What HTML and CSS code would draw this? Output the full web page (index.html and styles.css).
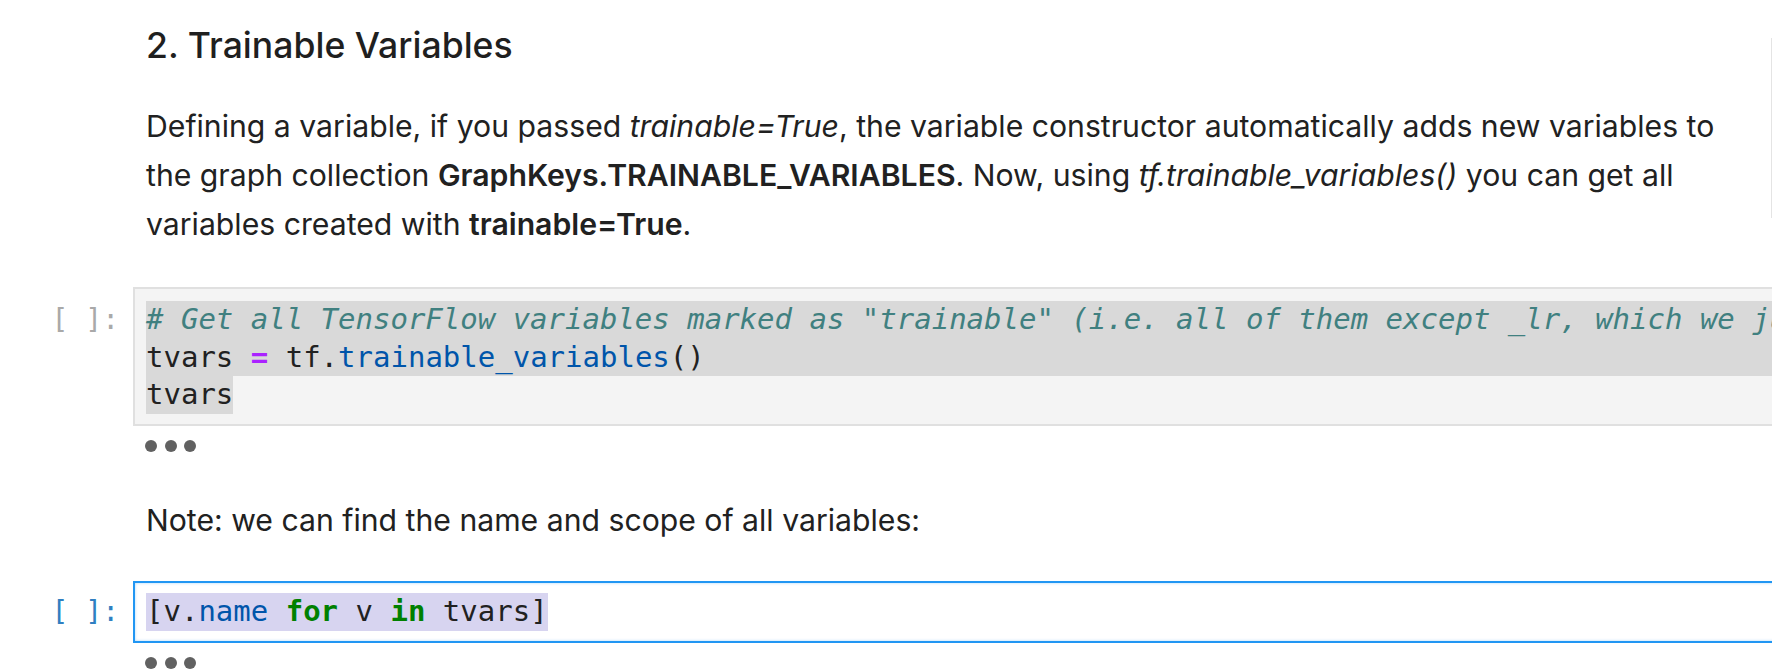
FILE: index.html
```html
<!DOCTYPE html>
<html lang="en">
<head>
<meta charset="utf-8">
<title>Trainable Variables</title>
<link rel="stylesheet" href="styles.css">
</head>
<body>
<div class="edge-line"></div>
<main class="notebook">
  <section class="cell md-cell">
    <div class="prompt"></div>
    <div class="md">
      <h4 class="md-h">2. Trainable Variables</h4>
      <p class="md-p">Defining a variable, if you passed <em>trainable=True</em>, the variable constructor automatically adds new variables to the graph collection <strong>GraphKeys.TRAINABLE_VARIABLES</strong>. Now, using <em>tf.trainable_variables()</em> you can get all variables created with <strong>trainable=True</strong>.</p>
    </div>
  </section>

  <section class="cell code-cell">
    <div class="prompt">[ ]:</div>
    <div class="code-wrap">
      <div class="editor">
        <div class="line sel"><span class="c"># Get all TensorFlow variables marked as "trainable" (i.e. all of them except _lr, which we just created)</span></div>
        <div class="line sel">tvars <span class="o">=</span> tf.<span class="f">trainable_variables</span>()</div>
        <div class="line"><span class="sel-inline">tvars</span></div>
      </div>
      <div class="collapsed"><i></i><i></i><i></i></div>
    </div>
  </section>

  <section class="cell md-cell note-cell">
    <div class="prompt"></div>
    <div class="md">
      <p class="md-p">Note: we can find the name and scope of all variables:</p>
    </div>
  </section>

  <section class="cell code-cell active">
    <div class="prompt">[ ]:</div>
    <div class="code-wrap">
      <div class="editor">
        <div class="line"><span class="sel-focus">[v.<span class="f">name</span> <span class="k">for</span> v <span class="k">in</span> tvars]</span></div>
      </div>
      <div class="collapsed"><i></i><i></i><i></i></div>
    </div>
  </section>
</main>
</body>
</html>
```

FILE: styles.css
```css
html, body {
  margin: 0;
  padding: 0;
  background: #ffffff;
  overflow: hidden;
}

body {
  width: 1772px;
  height: 670px;
  position: relative;
  font-family: "Inter", "Liberation Sans", sans-serif;
  color: #212121;
}

.edge-line {
  position: absolute;
  right: 0;
  top: 38px;
  width: 1px;
  height: 180px;
  background: #e4e4e4;
}

.notebook {
  width: 1920px;
  padding-top: 24px;
  display: flex;
  flex-direction: column;
}

.cell {
  display: grid;
  grid-template-columns: 133px 1fr;
}

.prompt {
  font-family: "DejaVu Sans Mono", monospace;
  font-size: 28px;
  line-height: 37.7px;
  color: #a9a9a9;
  text-align: right;
  padding-right: 14px;
  padding-top: 14px;
  white-space: pre;
}

.active .prompt {
  color: #307fc1;
  padding-top: 12px;
}

.md {
  padding-left: 13px;
  max-width: 1590px;
}

.md-h {
  margin: 0 0 35px;
  font-size: 35.6px;
  line-height: 43px;
  font-weight: 500;
  color: #1f1f1f;
}

.md-p {
  margin: 0;
  font-size: 30.2px;
  line-height: 49px;
}

.md-p strong {
  font-weight: 600;
}

.code-cell {
  margin-top: 38px;
}

.note-cell {
  margin-top: 44px;
}

.note-cell + .code-cell {
  margin-top: 36px;
}

.editor {
  background: #f4f4f4;
  border: 2px solid #e0e0e0;
  padding: 12px 0 10px 11px;
  font-family: "DejaVu Sans Mono", monospace;
  font-size: 29px;
  line-height: 37.7px;
  color: #212121;
}

.active .editor {
  background: #ffffff;
  border-color: #2196f3;
  box-shadow: inset 0 0 3px rgba(100, 181, 246, 0.55);
  padding-top: 10px;
}

.line {
  height: 37.7px;
  white-space: pre;
}

.line.sel {
  background: #d9d9d9;
}

.sel-inline {
  background: #d9d9d9;
  display: inline-block;
}

.sel-focus {
  background: #d7d4f0;
  display: inline-block;
}

.c {
  color: #408080;
  font-style: italic;
}

.o {
  color: #aa22ff;
  font-weight: bold;
}

.f {
  color: #0055aa;
}

.k {
  color: #008000;
  font-weight: bold;
}

.collapsed {
  display: flex;
  gap: 7.5px;
  padding: 14px 0 0 12px;
}

.collapsed i {
  width: 12px;
  height: 12px;
  border-radius: 50%;
  background: #616161;
}
```
